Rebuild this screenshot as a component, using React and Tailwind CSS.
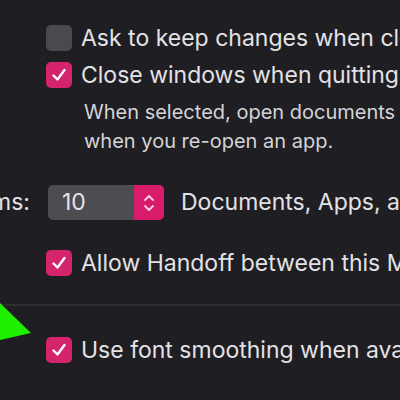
import React from 'react';

const font = { fontFamily: 'Inter, "Noto Sans", sans-serif' };

const Box = ({ checked }) =>
  checked ? (
    <span className="w-[26px] h-[26px] shrink-0 rounded-[5px] bg-[#d4246c] flex items-center justify-center">
      <svg width="18" height="18" viewBox="0 0 18 18" fill="none">
        <path d="M3.5 9.5 L7.5 13.5 L14.5 4" stroke="#fff" strokeWidth="2.4" strokeLinecap="round" strokeLinejoin="round" />
      </svg>
    </span>
  ) : (
    <span className="w-[26px] h-[26px] shrink-0 rounded-[5px] bg-[#4a494f]" />
  );

const Row = ({ checked, children }) => (
  <div className="flex items-center gap-[9px] pl-[46px] h-[26px]">
    <Box checked={checked} />
    <span className="shrink-0 text-[23px] text-[#e3e2e6] leading-none">{children}</span>
  </div>
);

export default function App() {
  return (
    <div className="w-[400px] h-[400px] bg-[#1f1e22] overflow-hidden whitespace-nowrap relative" style={font}>
      <div className="pt-[25px]">
        <Row>Ask to keep changes when closing documents</Row>
        <div className="mt-[11px]">
          <Row checked>Close windows when quitting an app</Row>
        </div>
        <div className="pl-[84px] mt-[10px] text-[20px] leading-[29px] text-[#d5d4d8]">
          <div>When selected, open documents and windows will not be restored</div>
          <div>when you re-open an app.</div>
        </div>

        <div className="flex items-center mt-[29px] h-[35px]">
          <div className="w-[30px] shrink-0 overflow-hidden flex justify-end text-[23px] text-[#e3e2e6]">
            <span className="shrink-0">Recent items:</span>
          </div>
          <div className="ml-[18px] shrink-0 w-[116px] h-[35px] rounded-[5px] bg-[#4d4c51] flex overflow-hidden">
            <span className="flex-1 pl-[14px] flex items-center text-[23px] text-[#e3e2e6]">10</span>
            <span className="w-[30px] shrink-0 bg-[#d81b6b] flex items-center justify-center">
              <svg width="14" height="24" viewBox="0 0 14 24" fill="none">
                <path d="M3 9 L7 5 L11 9" stroke="#f6d0e0" strokeWidth="1.8" strokeLinecap="round" strokeLinejoin="round" />
                <path d="M3 15 L7 19 L11 15" stroke="#f6d0e0" strokeWidth="1.8" strokeLinecap="round" strokeLinejoin="round" />
              </svg>
            </span>
          </div>
          <span className="ml-[17px] shrink-0 text-[23px] text-[#e3e2e6]">Documents, Apps, and Servers</span>
        </div>

        <div className="mt-[30px]">
          <Row checked>Allow Handoff between this Mac and your iCloud devices</Row>
        </div>

        <div className="mt-[28px] h-[2px] bg-[#2e2d32]" />

        <div className="mt-[31px]">
          <Row checked>Use font smoothing when available</Row>
        </div>
      </div>

      <svg className="absolute left-0 top-[300px]" width="40" height="45" viewBox="0 0 40 45">
        <polygon points="0,3 31,33 0,40" fill="#1ff000" />
      </svg>
    </div>
  );
}
